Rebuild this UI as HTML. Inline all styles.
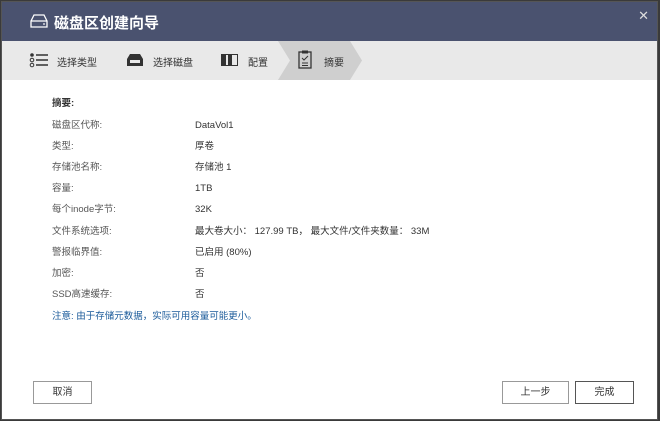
<!DOCTYPE html>
<html><head><meta charset="utf-8"><style>
*{margin:0;padding:0;box-sizing:border-box}
body{width:660px;height:421px;background:#3a3a3a;font-family:"Liberation Sans","Noto Sans CJK SC",sans-serif;position:relative;overflow:hidden}
#dlg{position:absolute;left:1px;top:1px;width:657px;height:419px;background:#fff;border:1px solid #555}
#title{position:absolute;left:0;top:0;width:100%;height:39px;background:#4a526f;color:#fff;font-size:15px;font-weight:bold}
#title span{position:absolute;left:52px;top:10px}
#steps{position:absolute;left:0;top:39px;width:100%;height:39px;background:#e9e9e9;font-size:10px;color:#333}
.st{position:absolute;top:13px}
.row{position:absolute;left:50px;font-size:9.5px;color:#555;line-height:12px;height:12px}
.val{position:absolute;left:193px;font-size:9.5px;color:#333;line-height:12px;height:12px}
.btn{position:absolute;top:379px;height:23px;border:1px solid #999;background:#fff;font-size:10px;color:#333;text-align:center;line-height:21px}
</style></head><body>
<div id="dlg">
<div id="title">
<svg style="position:absolute;left:28px;top:12px" width="18" height="14" viewBox="0 0 18 14"><path d="M1 7 L4 1 H14 L17 7 V13 H1 Z M1 7 H17" fill="none" stroke="#fff" stroke-width="1.3"/><circle cx="14" cy="10" r="0.9" fill="#fff"/></svg>
<span>磁盘区创建向导</span>
<div style="position:absolute;right:8px;top:6px;font-size:13px;color:#ddd;font-weight:normal">✕</div>
</div>
<div id="steps">
<svg style="position:absolute;left:276px;top:0" width="86" height="39"><path d="M0 0 H72 L84 19.5 L72 39 H0 L12 19.5 Z" fill="#cfcfcf"/></svg>
<svg style="position:absolute;left:27px;top:11px" width="20" height="16"><circle cx="3" cy="3" r="1.8" fill="#333"/><circle cx="3" cy="8" r="1.8" fill="none" stroke="#333"/><circle cx="3" cy="13" r="1.8" fill="none" stroke="#333"/><path d="M7 3H19M7 8H19M7 13H19" stroke="#333" stroke-width="1.6"/></svg>
<div class="st" style="left:55px">选择类型</div>
<svg style="position:absolute;left:124px;top:12px" width="18" height="14"><path d="M1 6 L4 1 H14 L17 6 V13 H1 Z" fill="#333"/><rect x="4" y="7" width="10" height="3" fill="#e9e9e9"/></svg>
<div class="st" style="left:151px">选择磁盘</div>
<svg style="position:absolute;left:219px;top:13px" width="18" height="12"><rect x="0.5" y="0.5" width="16" height="11" fill="none" stroke="#333"/><rect x="1" y="1" width="4" height="10" fill="#333"/><rect x="7" y="1" width="4" height="10" fill="#333"/></svg>
<div class="st" style="left:246px">配置</div>
<svg style="position:absolute;left:296px;top:9px" width="14" height="19"><rect x="1" y="2" width="12" height="16" fill="none" stroke="#333" stroke-width="1.3"/><rect x="4" y="0.5" width="6" height="3" fill="#333"/><path d="M4 8 L6 10 L10 6 M4 13H10M4 15.5H10" stroke="#333" fill="none"/></svg>
<div class="st" style="left:322px">摘要</div>
</div>
<div class="row" style="top:96px;font-weight:bold;color:#333">摘要:</div>
<div class="row" style="top:118px">磁盘区代称:</div><div class="val" style="top:118px">DataVol1</div>
<div class="row" style="top:139px">类型:</div><div class="val" style="top:139px">厚卷</div>
<div class="row" style="top:160px">存储池名称:</div><div class="val" style="top:160px">存储池 1</div>
<div class="row" style="top:181px">容量:</div><div class="val" style="top:181px">1TB</div>
<div class="row" style="top:202px">每个inode字节:</div><div class="val" style="top:202px">32K</div>
<div class="row" style="top:224px">文件系统选项:</div><div class="val" style="top:224px">最大卷大小： 127.99 TB， 最大文件/文件夹数量： 33M</div>
<div class="row" style="top:245px">警报临界值:</div><div class="val" style="top:245px">已启用 (80%)</div>
<div class="row" style="top:266px">加密:</div><div class="val" style="top:266px">否</div>
<div class="row" style="top:287px">SSD高速缓存:</div><div class="val" style="top:287px">否</div>
<div class="row" style="top:309px;color:#1a5a9a">注意: 由于存储元数据，实际可用容量可能更小。</div>
<div class="btn" style="left:31px;width:59px">取消</div>
<div class="btn" style="left:500px;width:67px">上一步</div>
<div class="btn" style="left:573px;width:59px;border-color:#555">完成</div>
</div>
</body></html>
